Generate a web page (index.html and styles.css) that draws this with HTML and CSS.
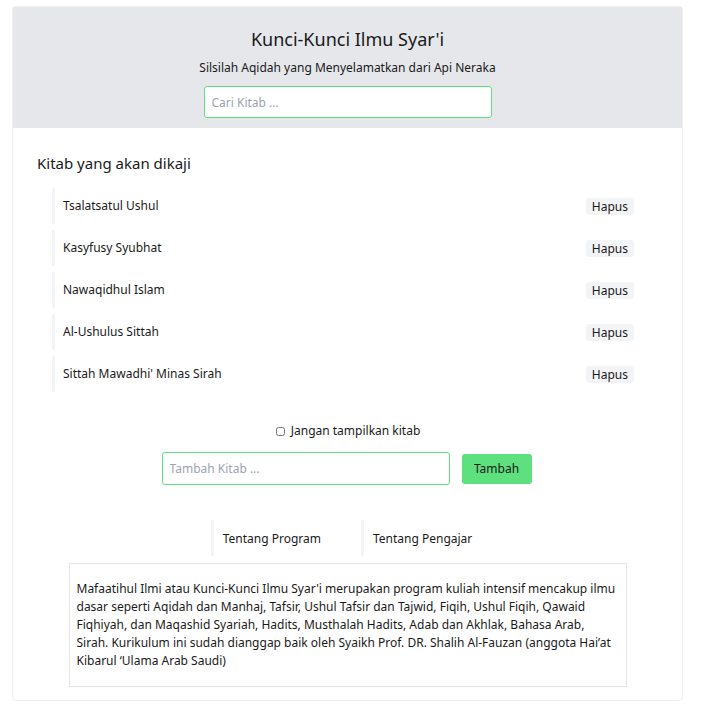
FILE: index.html
```html
<!DOCTYPE html>
<html lang="id">
<head>
<meta charset="utf-8">
<title>Kunci-Kunci Ilmu Syar'i</title>
<link rel="stylesheet" href="styles.css">
</head>
<body>
<div class="card">
  <header class="hero">
    <h1 class="title">Kunci-Kunci Ilmu Syar'i</h1>
    <p class="subtitle">Silsilah Aqidah yang Menyelamatkan dari Api Neraka</p>
    <input class="field search" type="text" placeholder="Cari Kitab ...">
  </header>
  <section class="books">
    <h2 class="heading">Kitab yang akan dikaji</h2>
    <ul class="list">
      <li class="item"><span>Tsalatsatul Ushul</span><button class="del">Hapus</button></li>
      <li class="item"><span>Kasyfusy Syubhat</span><button class="del">Hapus</button></li>
      <li class="item"><span>Nawaqidhul Islam</span><button class="del">Hapus</button></li>
      <li class="item"><span>Al-Ushulus Sittah</span><button class="del">Hapus</button></li>
      <li class="item"><span>Sittah Mawadhi' Minas Sirah</span><button class="del">Hapus</button></li>
    </ul>
    <label class="check"><input type="checkbox" class="box"> Jangan tampilkan kitab</label>
    <div class="add">
      <input class="field addfield" type="text" placeholder="Tambah Kitab ...">
      <button class="addbtn">Tambah</button>
    </div>
    <nav class="tabs">
      <span class="tab">Tentang Program</span>
      <span class="tab">Tentang Pengajar</span>
    </nav>
    <div class="panel">
      <p>Mafaatihul Ilmi atau Kunci-Kunci Ilmu Syar'i merupakan program kuliah intensif mencakup ilmu dasar seperti Aqidah dan Manhaj, Tafsir, Ushul Tafsir dan Tajwid, Fiqih, Ushul Fiqih, Qawaid Fiqhiyah, dan Maqashid Syariah, Hadits, Musthalah Hadits, Adab dan Akhlak, Bahasa Arab, Sirah. Kurikulum ini sudah dianggap baik oleh Syaikh Prof. DR. Shalih Al-Fauzan (anggota Hai’at Kibarul ‘Ulama Arab Saudi)</p>
    </div>
  </section>
</div>
</body>
</html>
```

FILE: styles.css
```css
* { box-sizing: border-box; }
html, body {
  margin: 0;
  padding: 0;
  background: #ffffff;
}
body {
  font-family: "Noto Sans", "Open Sans", sans-serif;
  color: #1a1a1a;
  font-size: 12px;
}
.card {
  width: 671px;
  margin: 6px 0 0 12px;
  border: 1px solid #efefef;
  border-radius: 4px;
  padding-bottom: 13px;
}
.hero {
  background: #e5e7eb;
  display: flex;
  flex-direction: column;
  align-items: center;
  padding: 20px 0 10px;
}
.title {
  margin: 0;
  font-size: 18px;
  line-height: 24px;
  font-weight: 400;
}
.subtitle {
  margin: 8px 0 0;
  font-size: 12px;
  line-height: 18px;
}
.field {
  font-family: inherit;
  font-size: 12px;
  border: 1.5px solid #5ee07f;
  border-radius: 3px;
  background: #fff;
  padding: 0 7px;
  outline: none;
  color: #1a1a1a;
}
.field::placeholder { color: #9ca3af; }
.search {
  width: 288px;
  height: 32px;
  margin-top: 9px;
}
.books {
  display: flex;
  flex-direction: column;
  padding-top: 24px;
}
.heading {
  margin: 0 0 0 24px;
  font-size: 15px;
  line-height: 22px;
  font-weight: 400;
}
.list {
  list-style: none;
  margin: 14px 39px 0 39px;
  padding: 0;
  display: flex;
  flex-direction: column;
  gap: 6px;
}
.item {
  height: 36px;
  border-left: 3px solid #f3f4f6;
  padding: 0 9px 0 8px;
  display: flex;
  align-items: center;
  justify-content: space-between;
  line-height: 18px;
}
.del {
  font-family: inherit;
  font-size: 12px;
  line-height: 17px;
  height: 17px;
  padding: 0 6px;
  border: none;
  border-radius: 3px;
  background: #f3f4f6;
  color: #1a1a1a;
}
.check {
  align-self: center;
  margin-top: 30px;
  margin-left: 1px;
  line-height: 18px;
  display: flex;
  align-items: center;
  gap: 6px;
}
.box {
  width: 9px;
  height: 9px;
  margin: 0;
}
.add {
  align-self: center;
  margin-top: 12px;
  margin-right: 2px;
  display: flex;
  align-items: center;
  gap: 12px;
}
.addfield {
  width: 288px;
  height: 33px;
}
.addbtn {
  font-family: inherit;
  font-size: 12px;
  height: 30px;
  width: 70px;
  border: none;
  border-radius: 3px;
  background: #5ee07f;
  color: #1a1a1a;
}
.tabs {
  align-self: center;
  margin-top: 35px;
  display: flex;
  gap: 28px;
}
.tab {
  height: 36px;
  display: flex;
  align-items: center;
  border-left: 3px solid #f3f4f6;
  padding: 0 12px 0 9px;
}
.panel {
  align-self: center;
  margin-top: 7px;
  width: 558px;
  border: 1px solid #e5e5e5;
  padding: 16px 7px;
}
.panel p {
  margin: 0;
  font-size: 12px;
  line-height: 18px;
}
```
